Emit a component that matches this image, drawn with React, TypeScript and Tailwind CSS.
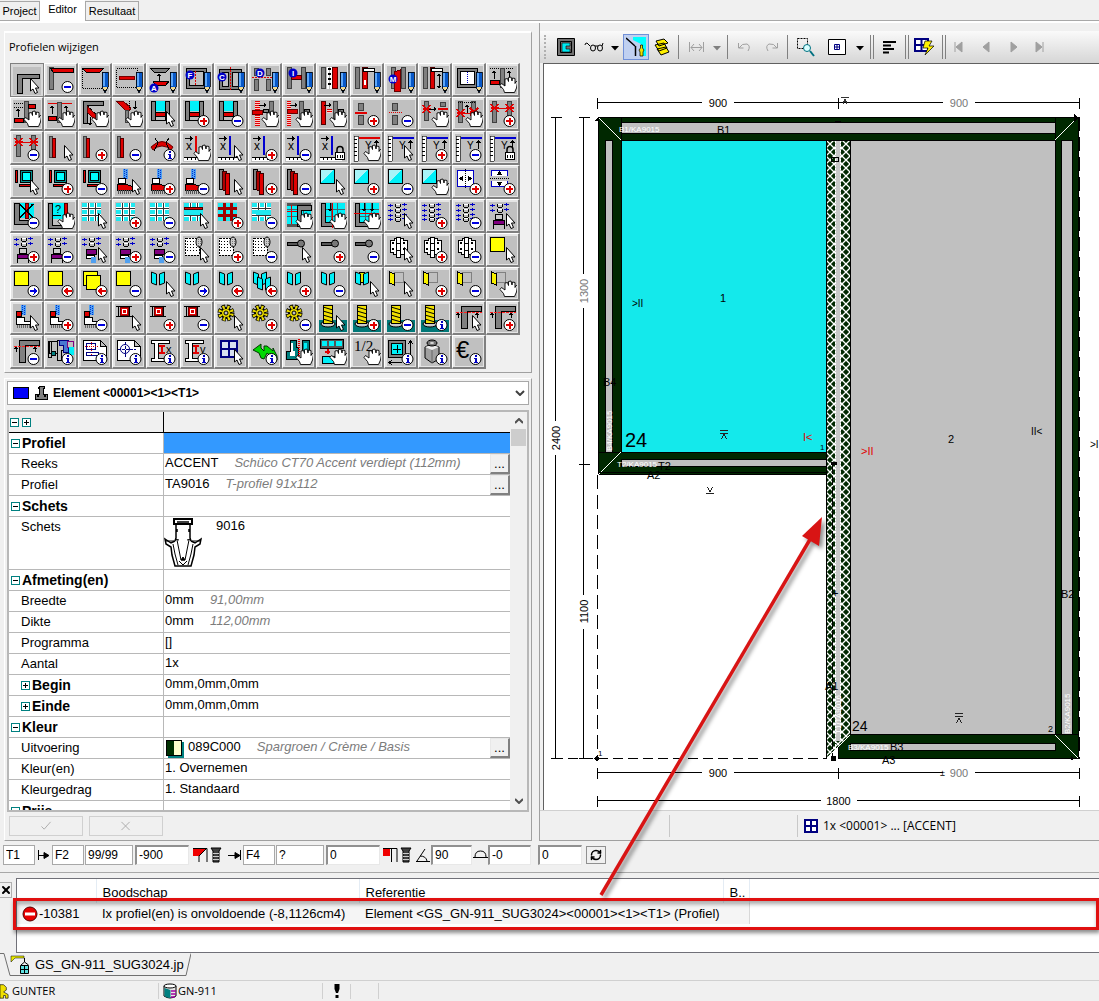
import type { ReactNode } from 'react';
import { RefreshCw, X } from 'lucide-react';

const RED = '#e00000';
const GRAY = '#808080';
const CYAN = '#00f0f8';
const BLUE = '#0000d0';

function Box({ x, y, w, h, f = 'none', s }: { x: number; y: number; w: number; h: number; f?: string; s?: string }) {
  // outlined boxes sit on the half pixel so their line stays one pixel wide
  const o = s ? 0.5 : 0;
  return <rect x={x + o} y={y + o} width={s ? w - 1 : w} height={s ? h - 1 : h} fill={f} stroke={s} />;
}

function Line({ d, c = '#000', dash, w = 1 }: { d: string; c?: string; dash?: string; w?: number }) {
  return <path d={d} fill="none" stroke={c} strokeWidth={w} strokeDasharray={dash} />;
}

function Glyph({ x, y, children, size = 10, c = '#000' }: { x: number; y: number; children: ReactNode; size?: number; c?: string }) {
  return (
    <text x={x} y={y} fontSize={size} fill={c} fontFamily="Liberation Sans, sans-serif">
      {children}
    </text>
  );
}

/* ---------- badges in the lower right corner of a tool ---------- */

const disc = <circle cx="20.5" cy="21" r="5.5" fill="#fff" stroke="#000" shapeRendering="auto" />;

const badges: Record<string, ReactNode> = {
  none: null,
  plus: (
    <>
      {disc}
      <path d="M17 20h7v2h-7zM19.5 17.5h2v7h-2z" fill={RED} />
    </>
  ),
  minus: (
    <>
      {disc}
      <path d="M17 20h7v2h-7z" fill="#0000e0" />
    </>
  ),
  info: (
    <>
      {disc}
      <path d="M19.5 17h2v2h-2zM19 20h2.5v4h1v1h-4v-1h1v-3h-.5z" fill="#0000c0" />
    </>
  ),
  next: (
    <>
      {disc}
      <path d="M16.5 20h4v-2.5l4 3.5-4 3.5V22h-4z" fill="#0000e0" />
    </>
  ),
  back: (
    <>
      {disc}
      <path d="M24.5 20h-4v-2.5l-4 3.5 4 3.5V22h4z" fill={RED} />
    </>
  ),
  arrow: (
    <path d="M17.5 11.5v12.500l2.500-2 2 4.500 2.500-1-2-4.500h3.500z" fill="#fff" stroke="#000" shapeRendering="auto" />
  ),
  hand: (
    <path
      d="M15.500 26.500l-1-3-3.500-4 1.500-2 3.500 2.500v-7l2.500-.5 1 3v-4l2.500-.5 1 4 .5-3 2.500.5v5l1-2 1.500.5-1 6-2 4.500z"
      fill="#fff"
      stroke="#000"
      strokeWidth=".9"
      shapeRendering="auto"
    />
  ),
  pencil: (
    <>
      <path d="M21 6h6v15l-3 5.500-3-5.500z" fill="#0858c8" stroke="#000" strokeWidth=".8" />
      <path d="M22 7h1.500v13H22z" fill="#60a8f8" />
      <path d="M21.500 21h5l-2.500 4z" fill="#f0d890" />
      <path d="M23 24h2l-1 2.500z" fill="#000" />
    </>
  ),
  lock: (
    <>
      <path d="M18 19v-3.500q0-3 3-3t3 3V19" fill="none" stroke="#000" strokeWidth="1.500" shapeRendering="auto" />
      <Box x={16} y={18} w={10} h={8} f="#fff" s="#000" />
      <path d="M18 21h1v3h-1zM20.500 21h1v3h-1zM23 21h1v3h-1z" fill="#000" />
    </>
  ),
};

/* ---------- base drawings ---------- */

function Letter({ x, y, l }: { x: number; y: number; l: string }) {
  return (
    <>
      <circle cx={x} cy={y} r="4.500" fill="#0000c8" shapeRendering="auto" />
      <text x={x} y={y + 3} fontSize="8" fontWeight="bold" fill="#fff" textAnchor="middle" fontFamily="Liberation Sans, sans-serif">
        {l}
      </text>
    </>
  );
}

function Bar({ x, y = 1, h = 22, c = GRAY, w = 5 }: { x: number; y?: number; h?: number; c?: string; w?: number }) {
  return <Box x={x} y={y} w={w} h={h} f={c} s={c === GRAY ? '#404040' : '#500000'} />;
}

function Check({ x, y, w, h }: { x: number; y: number; w: number; h: number }) {
  return (
    <>
      <Box x={x} y={y} w={w} h={h} f="#ffc8c8" />
      <path d={`M${x + w / 2} ${y}v${h}`} stroke={RED} strokeWidth={w} strokeDasharray="1 1" />
    </>
  );
}

function Up({ x, y }: { x: number; y: number }) {
  return <path d={`M${x} ${y}l-2.500 3h2v6h1v-6h2z`} />;
}

function Down({ x, y }: { x: number; y: number }) {
  return <path d={`M${x} ${y}l-2.500-3h2v-6h1v6h2z`} />;
}

function Right({ x, y }: { x: number; y: number }) {
  return <path d={`M${x} ${y}l-3-2.500v2h-5v1h5v2z`} />;
}

function Cross({ x, y }: { x: number; y: number }) {
  return <path d={`M${x - 4} ${y - 4}l8 8M${x - 4} ${y + 4}l8-8M${x - 4} ${y}h8`} stroke={RED} strokeWidth="1.500" />;
}

function Sill() {
  return (
    <>
      <Box x={2} y={1} w={5} h={20} f={GRAY} s="#000" />
      <Box x={16} y={1} w={5} h={20} f={GRAY} s="#000" />
      <Box x={7} y={1} w={9} h={10} f={CYAN} />
      <Box x={6} y={12} w={11} h={5} f={RED} s="#000" />
      <Line d="M2 20.500h19" />
    </>
  );
}

function RulerX({ c }: { c: string }) {
  return (
    <>
      <Right x={10} y={4.5} />
      <Glyph x={3} y={16} size={12}>x</Glyph>
      <Box x={12} y={2} w={2} h={19} f={c} />
      <path d="M1 23h22v4H1z" fill="#fff" />
      <path d="M1 23.500h22M4.500 23v3M8.500 23v3M12.500 23v3M16.500 23v3" stroke="#000" />
    </>
  );
}

function RulerY({ c }: { c: string }) {
  return (
    <>
      <path d="M1 2h4v25H1z" fill="#fff" stroke="#000" strokeWidth=".6" />
      <path d="M1 5.500h3M1 9.500h3M1 13.500h3M1 17.500h3M1 21.500h3" stroke="#000" />
      <Box x={6} y={3} w={21} h={2} f={c} />
      <Glyph x={12} y={15} size={10}>Y</Glyph>
      <Up x={23.5} y={6} />
    </>
  );
}

function CyanFrame() {
  return (
    <>
      <Box x={2} y={2} w={3} h={13} f={RED} s="#000" />
      <Box x={7} y={2} w={13} h={13} f="#009090" s="#000" />
      <Box x={9} y={4} w={9} h={9} f="#00ffff" s="#000" />
      <Box x={6} y={16} w={13} h={3} f={RED} s="#000" />
    </>
  );
}

function Foot({ small }: { small?: boolean }) {
  return (
    <>
      <Box x={8} y={1} w={5} h={10} f="#50a0f0" />
      <path d="M9.500 1v10M11.500 2v9" stroke="#0030d0" strokeDasharray="1 1" />
      {small ? (
        <>
          <circle cx="6" cy="10" r="3" fill={RED} stroke="#000" />
          <path d="M3 13h8v4h6v3H3z" fill="#fff" stroke="#000" />
          <path d="M4 22h14" stroke="#666" strokeWidth="3" strokeDasharray="1 1" />
        </>
      ) : (
        <>
          <path d="M3 10h7v5H3z" fill="#fff" stroke="#000" />
          <path d="M2 16h8l9 3v3H2z" fill={RED} stroke="#000" />
          <path d="M3 24h14" stroke="#555" strokeWidth="4" strokeDasharray="1 1" />
        </>
      )}
    </>
  );
}

function RedBars() {
  return (
    <>
      <path d="M2 1h4v20H2z" fill={GRAY} stroke="#000" />
      <path d="M5 3h4l1 20-4-1z" fill="#b00000" stroke="#300" />
      <path d="M8 5h4v21H8z" fill={RED} stroke="#300" />
    </>
  );
}

function Glass() {
  return (
    <>
      <Box x={1} y={1} w={15} h={15} f="#00f0f8" s="#000" />
      <path d="M2 2h12L2 14z" fill="#a8f4f8" />
    </>
  );
}

function GridTool({ mode }: { mode?: string }) {
  return (
    <>
      <Box x={1} y={1} w={19} h={18} f="#20e8f0" />
      <path d="M1 6.500h19M1 13.500h19M7.500 1v18M14.500 1v18" stroke="#fff" strokeWidth="3" />
      <path d="M1 6.500h19M1 13.500h19M7.500 1v18M14.500 1v18" stroke="#333" />
      {mode === 'h' && (
        <>
          <Box x={1} y={8} w={19} h={5} f="#20e8f0" />
          <Box x={1} y={5} w={19} h={3} f={RED} s="#400" />
        </>
      )}
      {mode === 'red' && <path d="M1 6.500h19M1 13.500h19M7.500 1v18M14.500 1v18" stroke="#a00000" strokeWidth="2.500" />}
      {mode === 'gap' && <Box x={5} y={8} w={15} h={5} f="#20e8f0" />}
    </>
  );
}

function FramedGrid({ mode }: { mode: string }) {
  return (
    <>
      <path d="M2 1h24v23H2z" fill={CYAN} />
      <path d="M12.500 1v22M18.500 1v22M2 7.500h24M2 14.500h24" stroke="#406870" />
      {mode === 'grid' ? (
        <>
          <path d="M2 2h24M2 23h14" stroke="#555" strokeWidth="3" />
          <path d="M12 3h14v5H16v16h-4z" fill={GRAY} stroke="#000" />
          <path d="M2 9.500h10M6.500 3v19" stroke={RED} />
        </>
      ) : (
        <>
          <path d="M2 1h4v19h18v4H2z" fill={GRAY} stroke="#000" />
          {mode === 'v' ? <path d="M13.500 1v25" stroke={RED} /> : <path d="M1 11.500h25" stroke={RED} />}
          <Down x={11} y={10} />
          {mode === 'h' && <Down x={19} y={10} />}
        </>
      )}
    </>
  );
}

function Coil({ foot }: { foot?: string }) {
  const steps = foot ? [3, 8] : [3, 8, 13, 17];
  return (
    <>
      {steps.map((y) => (
        <g key={y}>
          <path d={`M1 ${y + 0.5}h5M3.500 ${y - 1}v3M15 ${y - 0.5}h5M17.500 ${y - 2}v3`} stroke="#0000c8" />
          <path d={`M8.500 ${y - 1}v3M13.500 ${y - 1}v3M9 ${y + 2.5}h4`} stroke="#000" />
          <path d={`M9 ${y - 0.5}h4`} stroke="#fff" />
        </g>
      ))}
      {foot === 'base' && (
        <>
          <Box x={6} y={12} w={8} h={6} f="#ccc" s="#000" />
          <Box x={4} y={18} w={12} h={5} f="#800080" s="#000" />
          <path d="M4.500 18v9M15.500 18v9" stroke="#000" />
        </>
      )}
      {foot === 'drip' && (
        <>
          <Box x={5} y={13} w={11} h={6} f="#800080" s="#000" />
          <path d="M5 19h8v3H5z" fill="#fff" stroke="#000" />
          <Box x={10} y={21} w={5} h={6} f="#50a0f0" />
        </>
      )}
    </>
  );
}

function Blinds() {
  return (
    <>
      <path d="M3 2h13v17H2V4z" fill="#fff" stroke="#000" strokeDasharray="2 1" />
      <path d="M4 5.500h10M4 8.500h10M4 11.500h10M4 14.500h10" stroke="#000" strokeDasharray="1 2" />
      <ellipse cx="16" cy="6" rx="3" ry="5" fill="#ccc" stroke="#000" shapeRendering="auto" />
      <path d="M15 3v7M17 3v7" stroke="#777" strokeDasharray="1 1" />
    </>
  );
}

function Handle() {
  return (
    <>
      <path d="M2 6h14v3H2z" fill="#555" stroke="#000" />
      <circle cx="16" cy="7.500" r="3.500" fill="#777" stroke="#000" shapeRendering="auto" />
    </>
  );
}

function Hinge() {
  return (
    <>
      <path d="M3 4h4V2h9v2h4v12h-3v2H6v-2H3z" fill="#fff" stroke="#000" />
      <path d="M9.500 1v20h4V1zM9 7.500h5M9 14.500h5" fill="#fff" stroke="#000" />
      <path d="M5 6h2v2H5zM5 12h2v2H5zM16 6h2v2h-2zM16 12h2v2h-2z" />
    </>
  );
}

function Shutters({ mid }: { mid?: boolean }) {
  return (
    <>
      {mid && <Box x={6} y={2} w={6} h={11} f="#e8e800" s="#000" />}
      <path d="M2.500 2l5 2v11l-5-2zM15.500 2l-5 2v11l5-2z" fill={CYAN} stroke="#000" shapeRendering="auto" />
    </>
  );
}

function Door() {
  return (
    <>
      <Box x={7} y={2} w={10} h={11} s="#808080" />
      <path d="M2.500 2l5 2v11l-5-2z" fill="#f8f000" stroke="#000" />
    </>
  );
}

function RedSquare() {
  return (
    <>
      <path d="M1 2.500h16M1 12.500h16M3.500 2v11M14.500 2v11" stroke="#000" />
      <Box x={5} y={3} w={9} h={9} f={RED} s="#700" />
      <Box x={7} y={5} w={5} h={5} f={RED} s="#fff" />
    </>
  );
}

function Gear() {
  return (
    <g shapeRendering="auto" fill="none">
      <circle cx="9" cy="9" r="6.500" stroke="#000" strokeWidth="4" strokeDasharray="3.600 1.500" />
      <circle cx="9" cy="9" r="5" fill="#e8d800" stroke="#000" strokeWidth="2" />
      <circle cx="9" cy="9" r="6" stroke="#e8d800" strokeWidth="3.500" strokeDasharray="2 2.710" strokeDashoffset="-.6" />
      <circle cx="9" cy="9" r="2" fill="#c0c0c0" stroke="#000" />
    </g>
  );
}

function Screw() {
  return (
    <>
      <Box x={0} y={16} w={28} h={12} f="#007878" />
      <ellipse cx="9" cy="20" rx="7" ry="3" fill="#ccc" stroke="#000" shapeRendering="auto" />
      <Box x={4} y={1} w={10} h={19} f="#f0e000" s="#000" />
      <path d="M4 3l10 3M4 7l10 3M4 11l10 3M4 15l10 3" stroke="#000" shapeRendering="auto" />
    </>
  );
}

function DashedCorner() {
  return (
    <>
      <path d="M6 2h20v5H12v17H6z" fill={GRAY} stroke="#000" />
      <path d="M1 8.500h26" stroke="#ff2020" strokeDasharray="3 1" />
      <path d="M3 8l-2.500 3h2v3h1v-3h2zM22 8l-2.500 3h2v3h1v-3h2z" />
    </>
  );
}

function Doc() {
  return <path d="M2 2h17l6 6v14H2zM19 2v6h6" fill="#fff" stroke="#000" />;
}

function Beam({ l }: { l: string }) {
  return (
    <>
      <path d="M2 2h18v3H9v15h9v3H2v-3h3V5H2z" fill="#fff" stroke="#000" />
      <path d="M10 7h6v2h-2v5h2v2h-6v-2h2V9h-2z" fill={RED} />
      <Glyph x={17} y={15} size={11}>{l}</Glyph>
    </>
  );
}

const art: Record<string, ReactNode> = {
  corner: <path d="M4.500 7h22v4H9v15H4.500z" fill={GRAY} stroke="#000" />,
  cornerRed: (
    <>
      <Bar x={2} y={1} h={23} w={5} />
      <path d="M3 2h23v4H6z" fill={RED} stroke="#000" />
    </>
  ),
  dotTrap: (
    <>
      <path d="M1.500 3v19.500h20" fill="none" stroke="#000" strokeDasharray="1 1" />
      <path d="M1 2h22l-4 4H5z" fill={RED} stroke="#000" />
    </>
  ),
  dotPill: (
    <>
      <path d="M1.500 2.500h21v19h-21z" fill="none" stroke="#000" strokeDasharray="1 1" />
      <Box x={4} y={10} w={16} h={4} f={RED} s="#700" />
    </>
  ),
  frameA: (
    <>
      <path d="M1 2h20l-4 4H5z" fill={GRAY} stroke="#000" />
      <Up x={10} y={7} />
      <path d="M4 15h16l-3 4H6z" fill={RED} stroke="#000" />
      <Letter x={5} y={22} l="A" />
    </>
  ),
  frameF: (
    <>
      <path d="M3 2h20v20H3zM6 5v14h14V5z" fill={GRAY} stroke="#000" fillRule="evenodd" />
      <Line d="M12.500 5v14" c={RED} dash="2 1" />
      <Letter x={7} y={9} l="F" />
    </>
  ),
  frameC: (
    <>
      <path d="M2 3h22v20H2zM5 6v14h6V6zM15 6v14h6V6z" fill={GRAY} stroke="#000" fillRule="evenodd" />
      <Line d="M13 1v24" c={RED} dash="2 1" />
      <Letter x={5} y={11} l="C" />
    </>
  ),
  barsD: (
    <>
      <Bar x={3} y={2} h={8} />
      <Bar x={3} y={13} h={12} />
      <Bar x={15} y={2} h={8} />
      <Bar x={15} y={13} h={12} />
      <Line d="M1 11.500h20" c={RED} dash="2 1" />
      <Letter x={9} y={7} l="D" />
    </>
  ),
  barsI: (
    <>
      <Bar x={2} />
      <Bar x={16} />
      <Box x={6} y={9} w={11} h={5} f={RED} s="#400" />
      <Letter x={8} y={7} l="I" />
    </>
  ),
  barsDot: (
    <>
      <Bar x={2} />
      <Line d="M8.500 1v22M12 1v22" c="#fff" w={2} />
      <Line d="M10.500 2v20" w={3} dash="2 3" />
      <Bar x={13} c={RED} w={6} />
    </>
  ),
  barsHandle: (
    <>
      <Bar x={2} />
      <Bar x={9} c={RED} w={6} />
      <Box x={10} y={2} w={12} h={4} f="#fff" s="#000" />
      <Box x={11} y={14} w={2} h={5} f="#fff" />
    </>
  ),
  barsM: (
    <>
      <Bar x={4} />
      <Bar x={14} />
      <path d="M7 6l6-2v21H7z" fill={RED} stroke="#600" />
      <Letter x={6} y={13} l="M" />
    </>
  ),
  barsSize: (
    <>
      <Bar x={2} />
      <Bar x={9} c={RED} w={5} />
      <Box x={10} y={2} w={12} h={4} f="#fff" s="#000" />
      <Up x={18} y={7} />
      <Down x={18} y={23} />
    </>
  ),
  sheet: (
    <>
      <Box x={2} y={2} w={21} h={20} f={GRAY} s="#000" />
      <Box x={5} y={5} w={15} h={14} f="#fff" s="#000" />
      <Line d="M12.500 6v12" c="#0000c8" dash="1 1" />
    </>
  ),
  moveUp: (
    <>
      <Line d="M1 2.500h24" dash="1 1" />
      <Bar x={11} y={2} h={20} />
      <Box x={1} y={14} w={10} h={5} f={RED} s="#000" />
      <Up x={5} y={4} />
      <Up x={20} y={4} />
    </>
  ),
  stepBar: (
    <>
      <Line d="M1 3.500h10M1 7.500h10" dash="1 1" />
      <Bar x={11} />
      <Box x={15} y={4} w={8} h={5} f={RED} s="#000" />
      <Box x={1} y={18} w={10} h={5} f={RED} s="#000" />
      <Up x={5} y={8} />
    </>
  ),
  liftBar: (
    <>
      <Line d="M1 3.500h24" c={RED} />
      <Bar x={10} y={2} h={21} />
      <Box x={1} y={16} w={9} h={5} f={RED} s="#000" />
      <Up x={5} y={5} />
      <Up x={19} y={5} />
    </>
  ),
  diagIn: (
    <>
      <path d="M2 1h20v4H6v18H2z" fill={GRAY} stroke="#000" />
      <path d="M6 6l9 9-1 5-8-8z" fill={RED} stroke="#600" />
      <Line d="M6 5l14 14" dash="1 1" />
      <Down x={9} y={26} />
    </>
  ),
  diagOut: (
    <>
      <path d="M1 1h7l8 7-3 5z" fill={RED} stroke="#600" />
      <Bar x={10} y={10} h={13} w={4} />
      <Line d="M14.500 1v8" dash="1 1" />
      <Down x={20} y={10} />
    </>
  ),
  sill: <Sill />,
  hatchA: (
    <>
      <Check x={4} y={1} w={5} h={25} />
      <Box x={1} y={10} w={11} h={5} f={RED} s="#600" />
      <Bar x={18} y={1} h={18} />
      <Right x={16} y={5} />
      <Box x={12} y={9} w={6} h={4} f={GRAY} s="#000" />
    </>
  ),
  hatchB: (
    <>
      <Check x={2} y={1} w={4} h={25} />
      <Box x={2} y={9} w={11} h={5} f={RED} s="#600" />
      <Bar x={14} y={1} h={18} />
      <Right x={13} y={5} />
      <Box x={19} y={9} w={6} h={4} f={GRAY} s="#000" />
    </>
  ),
  hatchC: (
    <>
      <Bar x={2} y={1} h={24} c={RED} />
      <Check x={8} y={9} w={5} h={4} />
      <Bar x={14} y={1} h={18} />
      <Right x={13} y={5} />
      <Box x={19} y={9} w={6} h={4} f={GRAY} s="#000" />
    </>
  ),
  splitSolid: (
    <>
      <Bar x={5} y={3} h={8} w={6} />
      <Bar x={5} y={15} h={10} w={6} />
      <Box x={2} y={12} w={12} h={2} f={RED} />
    </>
  ),
  splitDash: (
    <>
      <Bar x={5} y={3} h={8} w={6} />
      <Bar x={5} y={15} h={10} w={6} />
      <Line d="M2 12.500h13" c={RED} dash="1 1" />
    </>
  ),
  crossMove: (
    <>
      <Bar x={3} y={1} h={20} />
      <Bar x={19} y={2} h={5} w={6} />
      <Cross x={5.5} y={9} />
      <Right x={16} y={9} />
      <Box x={17} y={8} w={10} h={2} f={RED} />
    </>
  ),
  crossLift: (
    <>
      <Bar x={3} />
      <Bar x={16} />
      <Cross x={5.5} y={13} />
      <Cross x={19} y={12} />
      <Line d="M3 2.500h18" dash="1 1" />
      <Up x={12} y={4} />
      <Line d="M9 13.500h7" c={RED} />
    </>
  ),
  crossPair: (
    <>
      <Bar x={3} />
      <Bar x={18} />
      <Cross x={5.5} y={8} />
      <Cross x={20.5} y={8} />
      <Line d="M9 8.500h8" c={RED} />
    </>
  ),
  twinBar: (
    <>
      <Bar x={2} y={2} h={22} w={4} />
      <Bar x={5} y={4} h={20} w={4} c={RED} />
    </>
  ),
  arch: (
    <>
      <path d="M2 13q11-11 22 0l-2 3q-9-8-18 0z" fill={RED} stroke="#600" shapeRendering="auto" />
      <path d="M6 4l3 5-4 8M20 4l-3 5 4 8" fill="none" stroke="#000" />
    </>
  ),
  xRed: <RulerX c={RED} />,
  xBlue: <RulerX c={BLUE} />,
  yRed: <RulerY c={RED} />,
  yBlue: <RulerY c={BLUE} />,
  cyanFrame: <CyanFrame />,
  foot: <Foot />,
  footSmall: <Foot small />,
  redBars: <RedBars />,
  glass: <Glass />,
  mirrorX: (
    <>
      <Box x={2} y={2} w={17} h={17} f="#fff" s="#0000c8" />
      <Line d="M10.500 1v20" dash="1 1" />
      <path d="M4 10.500l4-3v6zM17 10.500l-4-3v6z" />
    </>
  ),
  mirrorY: (
    <>
      <Box x={2} y={2} w={17} h={17} f="#fff" s="#0000c8" />
      <Box x={1} y={8} w={19} h={5} f="#c0c0c0" />
      <Line d="M1 10.500h19" dash="1 1" />
      <path d="M10.500 3l3 4h-6zM10.500 18l3-4h-6z" />
    </>
  ),
  cornerCross: (
    <>
      <path d="M7 1h14v15H7z" fill={CYAN} />
      <path d="M1 1h5v17h16v4H1z" fill={GRAY} stroke="#000" />
      <Bar x={12} y={1} h={16} w={4} c={RED} />
      <path d="M7 2l13 14M20 2L7 16" stroke="#000" strokeWidth="1.500" />
    </>
  ),
  cornerAsk: (
    <>
      <path d="M6 1h12v16H6z" fill={CYAN} />
      <path d="M1 1h4v22h12v3H1z" fill={GRAY} stroke="#000" />
      <Bar x={17} y={1} h={18} c={RED} w={4} />
      <Glyph x={8} y={11} size={11}>?</Glyph>
      <Line d="M6 13.500h8" />
    </>
  ),
  grid: <GridTool />,
  gridH: <GridTool mode="h" />,
  gridRed: <GridTool mode="red" />,
  gridGap: <GridTool mode="gap" />,
  frameGrid: <FramedGrid mode="grid" />,
  frameGridV: <FramedGrid mode="v" />,
  frameGridH: <FramedGrid mode="h" />,
  coil: <Coil />,
  coilBase: <Coil foot="base" />,
  coilDrip: <Coil foot="drip" />,
  blinds: <Blinds />,
  handle: <Handle />,
  hinge: <Hinge />,
  yellow: <Box x={1} y={1} w={15} h={15} f="#ffff00" s="#000" />,
  yellowTwo: (
    <>
      <Box x={2} y={1} w={15} h={15} f="#ffff00" s="#000" />
      <Box x={5} y={5} w={15} h={15} f="#ffff00" s="#000" />
    </>
  ),
  shutters: <Shutters />,
  shuttersTwo: (
    <>
      <Shutters />
      <g transform="translate(4 5)">
        <Shutters />
      </g>
    </>
  ),
  shuttersMid: <Shutters mid />,
  door: <Door />,
  redSquare: <RedSquare />,
  gear: <Gear />,
  screw: <Screw />,
  dashedCorner: <DashedCorner />,
  section: (
    <>
      <path d="M2 3h8v12H2zM1 3h3v16H1zM10 2h8v10h-4v10h-4z" fill="#c0c0c0" stroke="#000" />
      <path d="M12 2h9v12h-5V7h-4z" fill="#4878d0" stroke="#000080" />
      <path d="M20 3h6v6h-6z" fill="#c0c0c0" stroke="#800080" />
      <Box x={4} y={13} w={5} h={5} f="#008080" s="#000" />
      <Box x={22} y={9} w={5} h={8} f={CYAN} />
    </>
  ),
  docPlan: (
    <>
      <Doc />
      <Box x={5} y={5} w={10} h={7} s="#000080" />
      <Line d="M10.500 4v14M4 8.500h14" c={RED} dash="1 1" />
      <Box x={5} y={14} w={13} h={4} s="#000080" />
    </>
  ),
  docAim: (
    <>
      <Doc />
      <circle cx="10" cy="11" r="4.500" fill="none" stroke="#000080" shapeRendering="auto" />
      <Line d="M3 11.500h18M10.500 4v15" c="#000080" dash="3 1" />
    </>
  ),
  beamX: <Beam l="x" />,
  beamY: <Beam l="v" />,
  window: (
    <>
      <Box x={3} y={2} w={18} h={18} f="#000080" />
      <path d="M5 4h6v6H5zM13 4h6v6h-6zM5 12h6v6H5zM13 12h6v6h-6z" fill="#d8e0f0" />
    </>
  ),
  swap: (
    <path d="M2 12l8-6v4l3 3v-5h3l6 5v-3l4 8v4h-8l3-3-5-4-3 6-3-1-2-5z" fill="#00d800" stroke="#003800" shapeRendering="auto" />
  ),
  profiles: (
    <>
      <path d="M5 2h6v7h2v12H1v-8h4z" fill="#008080" stroke="#000" />
      <path d="M6 5h2v8h2v5H5v-4h1z" fill="#fff" />
      <path d="M13.500 1v20" stroke={RED} strokeWidth="2" strokeDasharray="1 1" />
      <path d="M17 2h7v19h-7z" fill="#008080" stroke="#000" />
      <Box x={19} y={5} w={3} h={12} f={CYAN} />
    </>
  ),
  panes: (
    <>
      <Box x={1} y={1} w={24} h={10} f="#555" s="#000" />
      <path d="M3 3h5v5H3zM10 3h5v5h-5zM17 3h6v5h-6z" fill={CYAN} />
      <path d="M6 13.500h5M8.500 11v5" stroke={RED} strokeWidth="2" />
      <Box x={3} y={18} w={14} h={8} f={CYAN} s="#000" />
    </>
  ),
  half: (
    <text x="1" y="13" fontSize="15" fontFamily="Liberation Serif, serif">
      1/2
    </text>
  ),
  frameSize: (
    <>
      <Box x={1} y={2} w={18} h={18} f={GRAY} s="#000" />
      <Box x={4} y={5} w={12} h={12} f={CYAN} s="#000" />
      <Line d="M6 11h8M10 7v8" />
      <Line d="M23.500 3v16M2 24.500h13M21 6l2.500-3 2.500 3M5 22l-3 2.500 3 2.500" />
    </>
  ),
  weight: (
    <g shapeRendering="auto">
      <path d="M4 9l6-3 8 3v12l-7 4-7-5z" fill="#a0a0a0" stroke="#000" />
      <path d="M4 9l7 3 7-3-7-2z" fill="#eee" />
      <path d="M11 12v13" stroke="#666" />
      <ellipse cx="11" cy="5" rx="5" ry="3" fill="#777" stroke="#000" />
      <ellipse cx="11" cy="5" rx="2" ry="1" fill="#ddd" />
    </g>
  ),
  euro: (
    <text x="1" y="20" fontSize="24" fontFamily="Liberation Sans, sans-serif">
      €
    </text>
  ),
};

const tools: string[] = [
  'corner:none cornerRed:minus dotTrap:pencil dotPill:pencil frameA:pencil frameF:pencil frameC:pencil barsD:pencil barsI:pencil barsDot:pencil barsHandle:pencil barsM:pencil barsSize:pencil sheet:pencil moveUp:hand',
  'stepBar:hand liftBar:hand diagIn:hand diagOut:hand sill:arrow sill:plus sill:minus hatchA:hand hatchB:hand hatchC:hand splitSolid:plus splitDash:minus crossMove:hand crossLift:hand crossPair:plus',
  'crossPair:minus twinBar:arrow twinBar:plus twinBar:minus arch:info xRed:hand xBlue:arrow xBlue:plus xBlue:minus xBlue:lock yRed:hand yBlue:arrow yBlue:plus yBlue:minus yBlue:lock',
  'cyanFrame:arrow cyanFrame:plus cyanFrame:minus foot:arrow foot:plus foot:minus redBars:arrow redBars:plus redBars:minus glass:arrow glass:plus glass:minus glass:hand mirrorX:plus mirrorY:plus',
  'cornerCross:minus cornerAsk:hand grid:arrow grid:plus grid:minus gridH:arrow gridRed:plus gridGap:minus frameGrid:hand frameGridV:hand frameGridH:hand coil:arrow coil:plus coil:minus coilBase:arrow',
  'coilBase:plus coilBase:minus coilDrip:arrow coilDrip:plus coilDrip:minus blinds:arrow blinds:plus blinds:minus handle:arrow handle:plus handle:minus hinge:arrow hinge:plus hinge:minus yellow:arrow',
  'yellow:next yellow:back yellowTwo:back yellow:minus shutters:arrow shutters:next shutters:back shuttersTwo:back shutters:plus shutters:minus shuttersMid:arrow door:arrow door:plus door:minus door:hand',
  'footSmall:arrow footSmall:plus footSmall:minus redSquare:arrow redSquare:plus redSquare:minus gear:arrow gear:plus gear:minus screw:arrow screw:plus screw:minus screw:info dashedCorner:arrow dashedCorner:plus',
  'dashedCorner:minus section:info docPlan:info docAim:info beamX:info beamY:info window:arrow swap:info profiles:hand panes:hand half:hand frameSize:info weight:info euro:info',
].flatMap((row) => row.split(' '));

function ToolButton({ spec, pressed }: { spec: string; pressed: boolean }) {
  const [name, badge] = spec.split(':');
  return (
    <button
      type="button"
      aria-label={`${name} ${badge}`}
      className={`size-[34px] border p-[2px] pr-[1px] pb-[1px] ${
        pressed
          ? 'border-[#808080] bg-[#d8d8d8]'
          : 'border-t-white border-l-white border-r-2 border-b-2 border-r-[#808080] border-b-[#808080] bg-[#e4e4e4]'
      }`}
    >
      <svg viewBox="0 0 28 28" className="size-7 bg-[#c0c0c0]" shapeRendering="crispEdges">
        {art[name]}
        {pressed ? badges.arrow : badges[badge]}
      </svg>
    </button>
  );
}

/* ---------- property grid ---------- */

function Expander({ open }: { open: boolean }) {
  return (
    <svg viewBox="0 0 9 9" className="size-[9px] shrink-0" shapeRendering="crispEdges">
      <rect x=".5" y=".5" width="8" height="8" fill="#fff" stroke="#008080" />
      <path d={open ? 'M2 4h5v1H2z' : 'M2 4h5v1H2zM4 2h1v5H4z'} />
    </svg>
  );
}

type Prop = { label: string; kind?: 'group' | 'sub'; value?: string; hint?: string; more?: boolean; active?: boolean; swatch?: boolean; sketch?: boolean };

const props: Prop[] = [
  { label: 'Profiel', kind: 'group', active: true },
  { label: 'Reeks', value: 'ACCENT', hint: 'Schüco CT70 Accent verdiept (112mm)', more: true },
  { label: 'Profiel', value: 'TA9016', hint: 'T-profiel 91x112', more: true },
  { label: 'Schets', kind: 'group' },
  { label: 'Schets', value: '9016', sketch: true },
  { label: 'Afmeting(en)', kind: 'group' },
  { label: 'Breedte', value: '0mm', hint: '91,00mm' },
  { label: 'Dikte', value: '0mm', hint: '112,00mm' },
  { label: 'Programma', value: '[]' },
  { label: 'Aantal', value: '1x' },
  { label: 'Begin', kind: 'sub', value: '0mm,0mm,0mm' },
  { label: 'Einde', kind: 'sub', value: '0mm,0mm,0mm' },
  { label: 'Kleur', kind: 'group' },
  { label: 'Uitvoering', value: '089C000', hint: 'Spargroen / Crème / Basis', more: true, swatch: true },
  { label: 'Kleur(en)', value: '1. Overnemen' },
  { label: 'Kleurgedrag', value: '1. Standaard' },
  { label: 'Prijs', kind: 'group' },
];

function ProfileSketch() {
  return (
    <svg viewBox="0 0 38 50" className="h-[50px] w-[38px] shrink-0" fill="none" stroke="#000">
      <path d="M10 2h18v5H10z" strokeWidth="2" />
      <path d="M14 4v3M24 4v3M15 5h8M12 7v14l-1 3M26 7v14l1 3M13 12v3M25 12v3" strokeWidth="1.500" />
      <path d="M11 24l-4 2-6-4 1 5 5 3 1 8 3 11h16l3-11 1-8 5-3 1-5-6 4-4-2" strokeWidth="1.500" />
      <path d="M13 23l4 20h4l4-20M9 27l2 10 3 11M29 27l-2 10-3 11M15 44l4 4 4-4M2 24h8M28 24h8M11 22l4 1M27 22l-4 1" />
      <path d="M17 43l2-3 2 3z" fill="#000" />
    </svg>
  );
}

function PropRow({ row }: { row: Prop }) {
  const bold = row.kind ? 'font-bold text-[14px]' : '';
  const indent = row.kind === 'group' ? 'pl-[2px]' : 'pl-[12px]';
  return (
    <tr className={row.sketch ? 'h-[53px]' : 'h-[21px]'}>
      <th scope="row" className={`border-r border-b border-[#b8b8b8] p-0 text-left align-top font-normal ${indent}`}>
        <div className={`flex h-5 items-center gap-[2px] ${bold}`}>
          {row.kind && <Expander open={row.kind === 'group'} />}
          {row.label}
        </div>
      </th>
      <td className={`border-b border-[#b8b8b8] p-0 align-top ${row.active ? 'bg-[#3399ff]' : ''}`}>
        <div className="flex items-start">
          {row.sketch && <ProfileSketch />}
          {row.swatch && (
            <span className="mt-[2px] ml-[2px] flex h-4 w-4 border border-black shadow-[2px_2px_0_#008080]">
              <span className="flex-1 bg-[#003000]" />
              <span className="flex-1 bg-[#ffffcc]" />
            </span>
          )}
          <span className={`h-[18px] leading-[18px] whitespace-pre ${row.sketch ? 'ml-[14px]' : row.swatch ? 'ml-1.5' : 'ml-px'}`}>{row.value}</span>
          {row.hint && <i className="ml-4 h-[18px] flex-1 leading-[18px] whitespace-nowrap text-[#7c7c7c]">{row.hint}</i>}
          {row.more && (
            <button
              type="button"
              aria-label={`${row.label} kiezen`}
              className="h-5 w-5 border-t border-r-2 border-b-2 border-l border-[#808080] border-t-[#e8e8e8] border-l-[#e8e8e8] bg-[#f0f0f0] leading-3"
            >
              ...
            </button>
          )}
        </div>
      </td>
    </tr>
  );
}

/* ---------- drawing ---------- */

const ink = '#002800';
const light = '#c0c0c0';

function Dim({ x1, x2, y, label, c = '#000', gap = 16 }: { x1: number; x2: number; y: number; label: string; c?: string; gap?: number }) {
  const mid = (x1 + x2) / 2;
  return (
    <>
      <path d={`M${x1} ${y}H${mid - gap}M${mid + gap} ${y}H${x2}M${x1} ${y - 5}v11M${x2} ${y - 5}v11`} stroke="#000" />
      <text x={mid} y={y + 4} fontSize="11" fill={c} textAnchor="middle">
        {label}
      </text>
    </>
  );
}

function DimV({ y1, y2, x, label, c = '#000' }: { y1: number; y2: number; x: number; label: string; c?: string }) {
  const mid = (y1 + y2) / 2;
  return (
    <>
      <path d={`M${x} ${y1}V${mid - 17}M${x} ${mid + 17}V${y2}M${x - 5} ${y1}h11M${x - 5} ${y2}h11`} stroke="#000" />
      <text transform={`translate(${x + 4} ${mid}) rotate(-90)`} fontSize="11" fill={c} textAnchor="middle">
        {label}
      </text>
    </>
  );
}

function Drawing() {
  return (
    <svg
      viewBox="544 65 555 746"
      preserveAspectRatio="xMinYMin meet"
      className="block h-[746px] w-full"
      fontFamily="Liberation Sans, sans-serif"
      fontSize="11"
      fill="none"
      shapeRendering="crispEdges"
    >
      <defs>
        <pattern id="hatch" x="826" y="141" width="8" height="8" patternUnits="userSpaceOnUse">
          <rect width="8" height="8" fill={ink} />
          <path d="M0 0l8 8M8 0L0 8" stroke="#fff" strokeWidth="1.300" shapeRendering="auto" />
        </pattern>
      </defs>
      <Dim x1={597.5} x2={838.5} y={103.5} label="900" />
      <Dim x1={838.5} x2={1079.5} y={103.5} label="900" c="#777" />
      <Dim x1={597.5} x2={838.5} y={773.5} label="900" />
      <Dim x1={838.5} x2={1079.5} y={773.5} label="900" c="#777" />
      <Dim x1={597.5} x2={1079.5} y={801.5} label="1800" gap={18} />
      <DimV y1={118.5} y2={465.5} x={583.5} label="1300" c="#777" />
      <DimV y1={465.5} y2={759.5} x={583.5} label="1100" />
      <DimV y1={118.5} y2={759.5} x={555.5} label="2400" />

      <g stroke="#000">
        <rect x="598.5" y="118.5" width="480" height="23" fill={ink} />
        <rect x="598.5" y="118.5" width="23" height="357" fill={ink} />
        <rect x="598.5" y="453.5" width="228" height="22" fill={ink} />
        <rect x="1055.5" y="118.5" width="23" height="641" fill={ink} />
        <rect x="838.5" y="735.5" width="240" height="24" fill={ink} />
        <rect x="621.5" y="141.5" width="205" height="312" fill="#14e9eb" />
        <rect x="850.5" y="141.5" width="205" height="594" fill={light} />
        <path d="M826.5 141.5h24v594l-24 24z" fill="url(#hatch)" />
        <rect x="621.5" y="123.5" width="434" height="11" fill={light} />
        <rect x="605.5" y="141.5" width="7" height="312" fill={light} />
        <rect x="621.5" y="460.5" width="205" height="7" fill={light} />
        <rect x="1061.5" y="141.5" width="11" height="594" fill={light} />
        <rect x="850.5" y="744.5" width="205" height="7" fill={light} />
      </g>
      <rect x="835" y="142" width="6" height="600" fill="#c8c8c8" />
      <path d="M835.5 142v608M840.5 142v600" stroke="#fff" strokeDasharray="2 1" />
      <path d="M832.5 466V759" stroke="#000" strokeDasharray="9 2" />
      <path d="M598 118l23 23M598 476l23-23M1078 118l-23 23M1078 759l-23-23M827 759l23-23" stroke="#fff" />
      <path d="M597.5 476V759M1079.5 118V759" stroke="#000" strokeDasharray="14 6" />
      <path d="M553 759.5H826" stroke="#000" strokeDasharray="10 5" />
      <path d="M838 759.5h242M598 473.500h228" stroke="#000" />
      <path d="M594 122l5-4v4zM1074 115l5 4-5 4zM594 759.500l3-3 3 3-3 3zM835 122h6v2h-6zM831 463h6v3h-6zM831 757h5v5h-5zM1071 757l4 2.500-4 2z" fill="#000" />
      <path d="M841 98.500h8M843 105l2-5 2 5" stroke="#333" />

      <g fill="#fff" fontSize="8">
        <text x="619" y="133">B1/KA9015</text>
        <text x="617" y="468">T2/KA9015</text>
        <text x="848" y="751">B3/KA9015</text>
        <text transform="translate(612 452) rotate(-90)">B4/KA9015</text>
        <text transform="translate(1070 735) rotate(-90)">B2/KA9015</text>
        <text transform="translate(841 735) rotate(-90)">T1/TA9016</text>
      </g>
      <g fill="#000">
        <text x="717" y="135">B1</text>
        <text x="658" y="471">T2</text>
        <text x="647" y="480">A2</text>
        <text x="890" y="752">B3</text>
        <text x="882" y="765">A3</text>
        <text x="603" y="387">B4</text>
        <text x="1061" y="599">B2</text>
        <text x="825" y="691">A1</text>
        <text x="832" y="598">+</text>
        <text x="720" y="303">1</text>
        <text x="948" y="444">2</text>
        <text x="625" y="448" fontSize="20">24</text>
        <text x="852" y="732" fontSize="14">24</text>
        <text x="820" y="451" fontSize="8">1</text>
        <text x="1048" y="733" fontSize="9">2</text>
        <text x="598" y="757" fontSize="8">1</text>
        <text x="632" y="308" fontSize="10">&gt;II</text>
        <text x="1031" y="436" fontSize="10">II&lt;</text>
        <text x="1090" y="449" fontSize="10">&gt;I</text>
        <text x="940" y="777" fontSize="9">±</text>
      </g>
      <path d="M831 158h7v4h-7z" stroke="#000" />
      <g fill={RED} fontSize="11">
        <text x="803" y="442">I&lt;</text>
        <text x="861" y="456">&gt;II</text>
      </g>
      <path d="M720 431.500h8M720 434.500h8M721.500 440l2.500-5 2.500 5M955 714.500h8M955 717.500h8M956.500 724l2.500-5 2.500 5M706 494.500h8M707.500 488l2.500 5 2.500-5" stroke="#222" />
    </svg>
  );
}

/* ---------- right toolbar ---------- */

function Icon({ children, w = 20 }: { children: ReactNode; w?: number }) {
  return (
    <svg viewBox={`0 0 ${w} 20`} width={w} height="20" fill="none" stroke="#000" className="shrink-0">
      {children}
    </svg>
  );
}

function ToolItem({ label, className, children }: { label: string; className?: string; children: ReactNode }) {
  return (
    <button type="button" aria-label={label} className={`flex shrink-0 items-center justify-center ${className ?? ''}`}>
      {children}
    </button>
  );
}

function Caret({ c = '#000' }: { c?: string }) {
  return (
    <Icon w={8}>
      <path d="M0 9h8l-4 4.500z" fill={c} stroke="none" />
    </Icon>
  );
}

function Sep({ double }: { double?: boolean }) {
  return <span className={`h-6 shrink-0 border-l border-[#808080] ${double ? 'w-1 border-r' : 'w-px'}`} />;
}

function Toolbar() {
  return (
    <div className="flex h-8 items-center overflow-hidden bg-linear-to-b from-[#fafafa] to-[#d6d6d6] pl-1">
      <span className="h-6 w-1 shrink-0 border-l-2 border-dotted border-[#b0b0b0]" />
      <ToolItem label="Element" className="ml-2">
        <Icon>
          <path d="M1.500 1.500h17v17h-17z" fill="#707070" />
          <path d="M4.500 4.500h11v11h-11z" fill="#707070" />
          <path d="M6 6h8v3h-4v3h4v3H6z" fill="#00e8f0" stroke="#000" strokeWidth=".6" />
        </Icon>
      </ToolItem>
      <ToolItem label="Weergave" className="ml-2">
        <Icon>
          <path d="M1 8q0-2 2-2l3 3M6.500 11a2.500 3 0 1 0 5 0 2.500 3 0 1 0-5 0M13.500 11a2.500 3 0 1 0 5 0 2.500 3 0 1 0-5 0M11 9h3M18 9l1-3" />
        </Icon>
      </ToolItem>
      <ToolItem label="Weergave kiezen" className="ml-[7px]">
        <Caret />
      </ToolItem>
      <ToolItem label="Buitenzicht" className="ml-1 h-[26px] w-[26px] border border-[#7090d8] bg-[#c0d0f0]">
        <Icon>
          <path d="M7 0h13v19h-5V7L7 3z" fill="#00ffff" stroke="none" />
          <path d="M0 1l9 8M9.500 9v10" strokeWidth="1.500" />
          <path d="M13 13l1.500-2v-3h2v3l1.500 2-1 2v4h-3v-4z" fill="#f0e000" strokeWidth=".7" />
        </Icon>
      </ToolItem>
      <ToolItem label="Lagen" className="ml-[3px]">
        <Icon>
          <path d="M5 12l9-2 3 5-8 3zM3 8l9-2 3 5-8 3zM4 4l8-2 4 4-9 3z" fill="#fff000" />
        </Icon>
      </ToolItem>
      <span className="w-1.5 shrink-0" />
      <Sep />
      <ToolItem label="Maat" className="ml-[9px]">
        <Icon w={17}>
          <path d="M1.500 5v10M15.500 5v10M3 10.500h11M6 7l-3 3.500 3 3.500M11 7l3 3.500-3 3.500" stroke="#a0a0a0" />
        </Icon>
      </ToolItem>
      <ToolItem label="Maat kiezen" className="mr-[6px] ml-2">
        <Caret c="#808080" />
      </ToolItem>
      <Sep />
      <ToolItem label="Ongedaan maken" className="ml-[7px]">
        <Icon>
          <path d="M3.500 6v5h5M4 11q3-5 8-4 4 2 1 7" stroke="#a0a0a0" />
        </Icon>
      </ToolItem>
      <ToolItem label="Opnieuw" className="mr-[6px] ml-[6px]">
        <Icon>
          <path d="M16.500 6v5h-5M16 11q-3-5-8-4-4 2-1 7" stroke="#a0a0a0" />
        </Icon>
      </ToolItem>
      <Sep />
      <ToolItem label="Inzoomen" className="ml-2">
        <Icon>
          <path d="M1.500 1.500h10v10h-10z" strokeDasharray="2 1" />
          <circle cx="11" cy="11" r="3.500" fill="#d8ffff" stroke="#007080" />
          <path d="M14 14l4 5" stroke="#007080" strokeWidth="2" />
        </Icon>
      </ToolItem>
      <ToolItem label="Passend" className="ml-3">
        <Icon>
          <path d="M.5 2.500h17v15H.5z" fill="#fff" />
          <path d="M6.500 7.500h5v5h-5zM9 7v6M6 10h6" stroke="#000080" />
        </Icon>
      </ToolItem>
      <ToolItem label="Passend kiezen" className="mr-[6px] ml-2">
        <Caret />
      </ToolItem>
      <Sep double />
      <ToolItem label="Uitlijnen" className="mx-2">
        <Icon w={15}>
          <path d="M1 5h13M1 8.500h8M1 12h11M1 15.500h6" strokeWidth="2" />
        </Icon>
      </ToolItem>
      <Sep double />
      <ToolItem label="Herberekenen" className="mr-[7px] ml-1">
        <Icon w={22}>
          <path d="M2 2h13v12H2zM8.500 2v12M2 8h13" fill="#fff" stroke="#000080" strokeWidth="2" />
          <path d="M12 4h7l-3 5h5l-9 9 3-7h-5z" fill="#fff000" strokeWidth=".7" />
        </Icon>
      </ToolItem>
      <Sep double />
      <div className="ml-1.5 flex gap-2">
        {['M3 5v10M10 5v10L4 10z', 'M10 5v10L4 10z', 'M5 5v10l6-5z', 'M3 5v10l6-5zM10 5v10'].map((d, i) => (
          <ToolItem key={d} label={['Eerste', 'Vorige', 'Volgende', 'Laatste'][i]}>
            <Icon w={19}>
              <path d={d} fill="#a0a0a0" stroke="#a0a0a0" />
            </Icon>
          </ToolItem>
        ))}
      </div>
    </div>
  );
}

/* ---------- bottom bar ---------- */

function Field({ label, value, className }: { label: string; value: string; className: string }) {
  return (
    <input
      aria-label={label}
      defaultValue={value}
      className={`h-5 shrink-0 border bg-white pl-[2px] text-[12px] outline-none ${className}`}
    />
  );
}

const flat = 'border-[#a8a8a8]';
const sunken = 'border-t-2 border-l-2 border-t-[#909090] border-l-[#909090] border-r-[#e8e8e8] border-b-[#e8e8e8]';

function Bolt() {
  return (
    <Icon w={12}>
      <path d="M1 3h10l-2 3v11H3V6z" fill="#404040" />
      <path d="M3 8.500h6M3 11.500h6M3 14.500h6" stroke="#ccc" />
    </Icon>
  );
}

function BottomBar() {
  return (
    <div className="flex h-8 items-center overflow-hidden border-b border-[#a8a8a8] pb-1 pl-[3px]">
      <Field label="Van profiel" value="T1" className={`w-8 ${flat}`} />
      <Icon w={17}>
        <path d="M3.500 5v10M4 10.500h9M9 7.500l5 3-5 3z" fill="#000" />
      </Icon>
      <Field label="Begin referentie" value="F2" className={`w-8 ${flat}`} />
      <Field label="Begin positie" value="99/99" className={`ml-px w-12 ${flat}`} />
      <Field label="Begin maat" value="-900" className={`ml-[2px] w-[54px] ${sunken}`} />
      <span className="ml-[3px] flex items-center gap-[2px]">
        <Icon w={16}>
          <path d="M1 4h13L7 11H1z" fill="#f00000" stroke="none" />
          <path d="M1 3.500h14V17M14 4l-7 7v6" />
        </Icon>
        <Bolt />
      </span>
      <span className="ml-1">
        <Icon w={17}>
          <path d="M14.500 5v10M2 10.500h10M9 7.500l5 3-5 3z" fill="#000" />
        </Icon>
      </span>
      <Field label="Einde referentie" value="F4" className={`w-8 ${flat}`} />
      <Field label="Einde positie" value="?" className={`ml-px w-12 ${flat}`} />
      <Field label="Einde maat" value="0" className={`ml-[2px] w-[54px] ${sunken}`} />
      <span className="ml-[2px] flex items-center gap-[2px]">
        <Icon w={16}>
          <path d="M1 4h7v7H1z" fill="#f00000" stroke="none" />
          <path d="M1 3.500h14V17M9.500 4v13" />
        </Icon>
        <Bolt />
        <Icon w={17}>
          <path d="M2 16.500h14M3 16l8-12M6 11q6 0 7 5" />
        </Icon>
      </span>
      <Field label="Hoek" value="90" className={`w-[41px] ${sunken}`} />
      <span className="ml-px">
        <Icon w={15}>
          <path d="M0 12.500h15M2 12q0-6 5.500-6t5.500 6" />
        </Icon>
      </span>
      <Field label="Boog" value="-0" className={`w-[43px] ${sunken}`} />
      <Field label="Verschuiving" value="0" className={`ml-[7px] w-[44px] ${sunken}`} />
      <button type="button" aria-label="Vernieuwen" className="ml-1 flex h-[18px] w-5 shrink-0 items-center justify-center border border-[#909090]">
        <RefreshCw className="size-3" strokeWidth={3} />
      </button>
    </div>
  );
}

function WindowMark() {
  return (
    <svg viewBox="0 0 14 14" className="size-[14px] shrink-0" shapeRendering="crispEdges">
      <rect width="14" height="14" fill="#000080" />
      <path d="M2 2h4v4H2zM8 2h4v4H8zM2 8h4v4H2zM8 8h4v4H8z" fill="#fff" />
    </svg>
  );
}

function Messages() {
  return (
    <div className="flex h-20 pt-[5px]">
      <button type="button" aria-label="Sluiten" className="mt-1 flex h-4 w-3 shrink-0 items-center justify-center border border-l-0 border-[#b0b0b0]">
        <X className="size-3 shrink-0" strokeWidth={4} />
      </button>
      <div className="relative ml-1 min-w-0 flex-1 border-t border-b border-l border-[#707078] bg-white">
        <table className="w-[733px] table-fixed border-collapse text-left">
          <colgroup>
            <col className="w-[79px]" />
            <col className="w-[263px]" />
            <col className="w-[364px]" />
            <col />
          </colgroup>
          <thead>
            <tr className="h-6">
              {['', 'Boodschap', 'Referentie', 'B..'].map((h) => (
                <th key={h} scope="col" className="border-r border-[#e4ecf4] p-0 pt-1 pl-1.5 font-normal">
                  {h}
                </th>
              ))}
            </tr>
          </thead>
          <tbody>
            <tr className="h-[21px] bg-[#f5f5f5]">
              <td className="p-0">
                <span className="flex items-center gap-px pl-[5px]">
                  <svg viewBox="0 0 16 16" className="size-4">
                    <circle cx="8" cy="8" r="7" fill="#e80000" stroke="#500" />
                    <path d="M3 6.500h10v3H3z" fill="#fff" />
                  </svg>
                  -10381
                </span>
              </td>
              <td className="p-0 pl-1.5 whitespace-nowrap">Ix profiel(en) is onvoldoende (-8,1126cm4)</td>
              <td className="p-0 pl-1.5 whitespace-nowrap">Element &lt;GS_GN-911_SUG3024&gt;&lt;00001&gt;&lt;1&gt;&lt;T1&gt; (Profiel)</td>
              <td className="border-r border-[#d8d8d8] p-0" />
            </tr>
          </tbody>
        </table>
        {/* marking round the error row */}
        <div className="pointer-events-none absolute top-[19px] right-0 -left-1 h-8 border-[3px] border-[#e01010] shadow-[1px_3px_4px_rgba(0,0,0,0.45),inset_1px_3px_4px_rgba(0,0,0,0.35)]" />
      </div>
    </div>
  );
}

export default function App() {
  return (
    <div className="relative flex min-h-screen flex-col overflow-hidden bg-[#f0f0f0] font-['Liberation_Sans',Arial,sans-serif] text-[13px] leading-4 text-black">
      <nav className="flex h-[21px] items-end border-b border-[#a8a8a8] text-[11px]">
        <button type="button" className="h-[19px] w-10 border-t border-r border-[#a8a8a8]">Project</button>
        <button type="button" className="-mb-px h-[21px] w-[45px] bg-white pb-1">Editor</button>
        <button type="button" className="h-[19px] w-[54px] border border-b-0 border-[#a8a8a8]">Resultaat</button>
      </nav>

      <div className="flex flex-1 border-t-2 border-white">
        <div className="flex w-[532px] shrink-0 flex-col gap-[5px] pt-2 pl-1">
          <section className="h-[342px] border-t-2 border-r border-b border-l border-t-white border-r-[#a0a0a0] border-b-[#a0a0a0] border-l-white pt-1.5 pl-1">
            <h2 className="font-['Open_Sans','Noto_Sans',sans-serif] text-[11px] leading-4">Profielen wijzigen</h2>
            <div className="mt-2 ml-px grid w-[510px] grid-cols-15">
              {tools.map((t, i) => (
                <ToolButton key={i} spec={t} pressed={i === 0} />
              ))}
            </div>
          </section>

          <section className="flex flex-1 flex-col border-t border-r border-b border-l border-t-white border-r-[#a0a0a0] border-b-[#a0a0a0] border-l-white px-[2px] pt-[2px]">
            <div className="relative flex h-6 items-center border border-[#a8a8a8] bg-white pl-[5px]">
              <svg viewBox="0 0 40 16" className="h-4 w-10 shrink-0" shapeRendering="crispEdges">
                <rect x=".5" y="2.500" width="15" height="11" fill="#0000f8" stroke="#000" />
                <path d="M26.500 1.500h5v2h-1v6h1v2h1v-2h2v5h-12v-5h2v2h1v-2h1v-6h-1z" fill="#808080" stroke="#000" />
              </svg>
              <select aria-label="Element" className="h-full flex-1 appearance-none bg-white text-[12px] font-bold outline-none">
                <option>Element &lt;00001&gt;&lt;1&gt;&lt;T1&gt;</option>
              </select>
              <svg viewBox="0 0 10 6" className="mr-[3px] h-[6px] w-[10px]" fill="none" stroke="#404040" strokeWidth="2">
                <path d="M1 1l4 4 4-4" />
              </svg>
            </div>

            <div className="mt-[5px] flex h-[402px] overflow-hidden border-2 border-[#b8b8b8] bg-white">
              <table className="h-fit flex-1 table-fixed border-separate border-spacing-0">
                <colgroup>
                  <col className="w-[155px]" />
                  <col />
                </colgroup>
                <thead>
                  <tr className="h-[21px] bg-[#f0f0f0]">
                    <th className="border-r border-b border-black p-0 pl-px">
                      <div className="flex gap-[3px]">
                        <Expander open />
                        <Expander open={false} />
                      </div>
                    </th>
                    <th className="border-b border-black p-0" />
                  </tr>
                </thead>
                <tbody>
                  {props.map((row, i) => (
                    <PropRow key={i} row={row} />
                  ))}
                </tbody>
              </table>
              <div className="flex w-[17px] shrink-0 flex-col items-center bg-[#f0f0f0] py-[6px]">
                <svg viewBox="0 0 8 6" className="h-[6px] w-2" fill="none" stroke="#505050" strokeWidth="2">
                  <path d="M0 5l4-4 4 4" />
                </svg>
                <span className="mt-[5px] h-[17px] w-[15px] bg-[#cdcdcd]" />
                <svg viewBox="0 0 8 6" className="mt-auto h-[6px] w-2" fill="none" stroke="#505050" strokeWidth="2">
                  <path d="M0 1l4 4 4-4" />
                </svg>
              </div>
            </div>

            <div className="mt-1 flex gap-[6px] pl-[2px]">
              {['M1 6l3 3 7-8', 'M1 1l9 9M10 1l-9 9'].map((d, i) => (
                <button
                  key={d}
                  type="button"
                  disabled
                  aria-label={i === 0 ? 'Toepassen' : 'Annuleren'}
                  className="flex h-5 w-[74px] items-center justify-center border border-[#d0d0d0]"
                >
                  <svg viewBox="0 0 12 11" className="h-[10px] w-3" fill="none" stroke="#a8a8a8">
                    <path d={d} />
                  </svg>
                </button>
              ))}
            </div>
          </section>
        </div>

        <div className="ml-[7px] flex min-w-0 flex-1 flex-col border-l border-[#a0a0a0] pt-2">
          <Toolbar />
          <div className="ml-[3px] overflow-hidden border-t border-l border-[#606060] bg-white">
            <Drawing />
          </div>
          <div className="flex flex-1 items-center border-t border-b border-t-[#d0d0d0] border-b-[#a0a0a0]">
            <span className="h-[22px] w-[130px] border-r border-[#c8c8c8]" />
            <span className="h-[22px] w-[128px] border-r border-[#c8c8c8]" />
            <span className="ml-1.5 flex items-center gap-[5px] font-['Open_Sans','Noto_Sans',sans-serif] text-[12px]">
              <WindowMark />
              1x &lt;00001&gt; ... [ACCENT]
            </span>
          </div>
        </div>
      </div>

      <BottomBar />
      <Messages />

      <div className="flex h-7 border-b border-[#d0d0d0]">
        <a href="#drawing" className="relative flex h-6 w-[191px] items-center pl-[10px]">
          <svg viewBox="0 0 191 24" className="absolute inset-0 h-6 w-[191px]" fill="#f0f0f0" stroke="#707070">
            <path d="M0 .5h4l6 22h176l5-22" />
          </svg>
          <span className="relative flex items-center gap-[5px]">
            <svg viewBox="0 0 20 20" className="size-5" fill="none" stroke="#000">
              <path d="M1 1h13v2H5l-4 4z" fill="#e8e800" strokeWidth=".5" />
              <path d="M14.500 3v4M11 10l3.500-3 4 3" />
              <path d="M10.500 10.500h8v8h-8zM14.500 10v9M10 14.500h9" fill="#60e0e0" />
            </svg>
            GS_GN-911_SUG3024.jp
          </span>
        </a>
        <span className="flex-1" />
      </div>

      <footer className="flex h-5 items-center font-['Open_Sans','Noto_Sans',sans-serif] text-[11px]">
        <span className="flex w-[159px] items-center gap-[3px] border-r border-[#d0d0d0]">
          <svg viewBox="0 0 10 16" className="h-4 w-[9px]">
            <path d="M0 1h4l3 3v3L4 9l5 3v4H6v-3H4v3H0z" fill="#f0e000" stroke="#000" strokeWidth=".7" />
          </svg>
          GUNTER
        </span>
        <span className="flex w-[164px] items-center gap-px border-r border-[#d0d0d0] pl-1">
          <svg viewBox="0 0 14 16" className="h-4 w-[14px]">
            <path d="M1 3v10q6 4 12 0V3z" fill="#e8e8e8" stroke="#000" />
            <path d="M1.500 5l6 2v8q-4 0-6-2z" fill="#008080" />
            <path d="M8 8h5M8 11h5M8 14h4" stroke="#a000a0" strokeWidth="1.500" />
            <ellipse cx="7" cy="3" rx="6" ry="2" fill="#fff" stroke="#000" />
          </svg>
          GN-911
        </span>
        <span className="flex w-7 justify-center border-r border-[#d0d0d0]">
          <svg viewBox="0 0 6 15" className="h-[15px] w-[6px]">
            <path d="M.5 0h5v5l-1.500 4h-2L.5 5zM1.500 11h3v3h-3z" />
          </svg>
        </span>
        <span className="h-4 w-7 border-r border-[#d0d0d0]" />
      </footer>

      {/* pointer from the message to the mullion it is about */}
      <svg viewBox="0 0 240 400" className="pointer-events-none absolute top-[510px] left-[595px] h-[400px] w-[240px] drop-shadow-[3px_3px_2px_rgba(0,0,0,0.45)]">
        <path d="M6 385L217 26" stroke="#d81414" strokeWidth="3.500" />
        <path d="M227 7l-3 29-17-10z" fill="#d81414" />
      </svg>
    </div>
  );
}
